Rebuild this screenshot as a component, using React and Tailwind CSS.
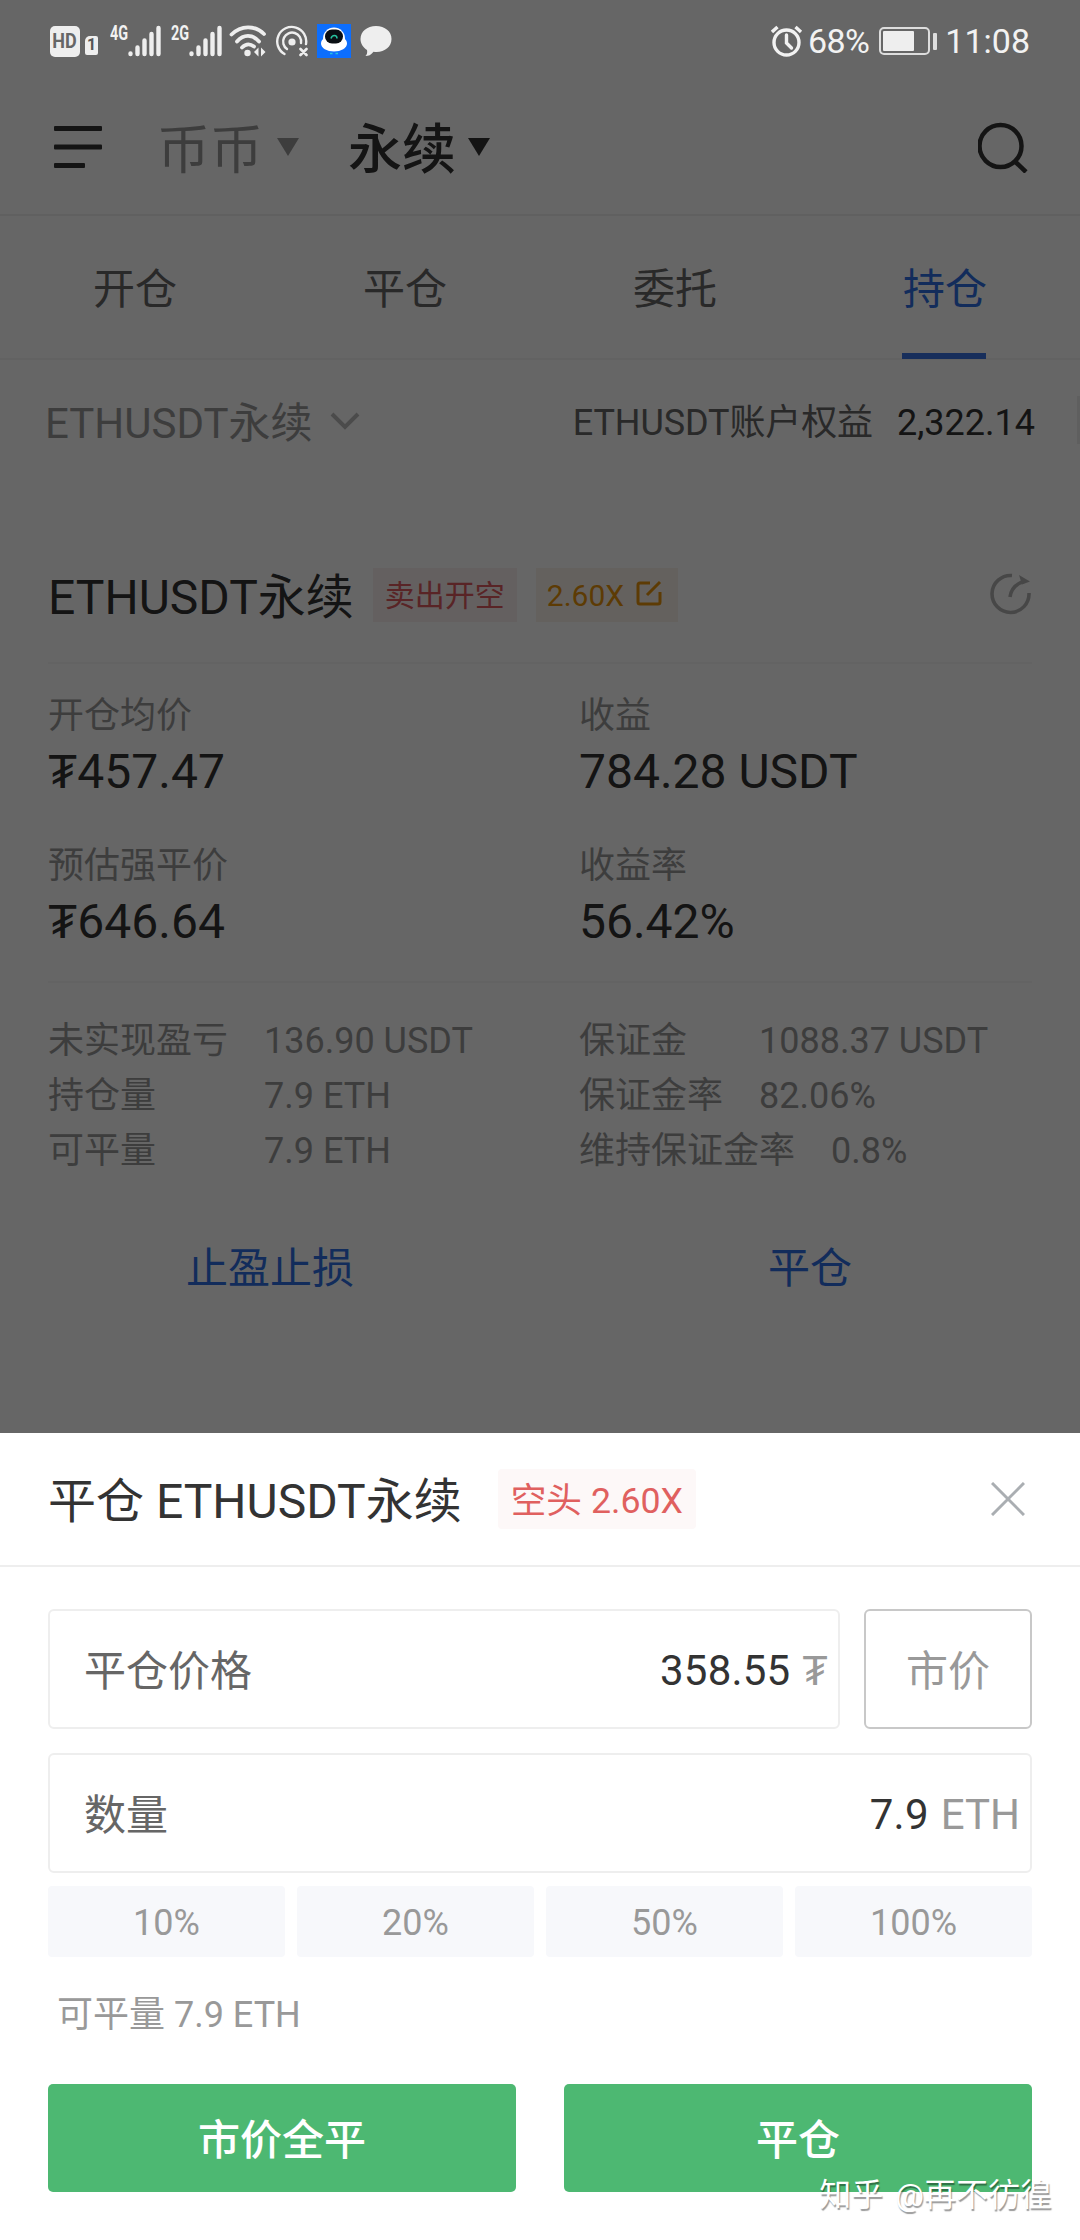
import { useState } from "react";

const tabs = ["开仓", "平仓", "委托", "持仓"];

const summary = [
    { label: "开仓均价", value: "₮457.47" },
    { label: "收益", value: "784.28 USDT" },
    { label: "预估强平价", value: "₮646.64" },
    { label: "收益率", value: "56.42%" },
];

const leftDetails = [
    { label: "未实现盈亏", value: "136.90 USDT" },
    { label: "持仓量", value: "7.9 ETH" },
    { label: "可平量", value: "7.9 ETH" },
];

const rightDetails = [
    { label: "保证金", value: "1088.37 USDT" },
    { label: "保证金率", value: "82.06%" },
    { label: "维持保证金率", value: "0.8%" },
];

const percents = ["10%", "20%", "50%", "100%"];

export default function App() {
    const [activeTab, setActiveTab] = useState("持仓");

    return (
        <div className="relative h-[2240px] w-[1080px] overflow-hidden bg-white font-[Roboto,'Noto_Sans_CJK_SC',sans-serif] text-[#333]">
            {/* Page below the overlay */}
            <div className="flex flex-col pt-[80px]">
                <TopBar />

                <nav className="grid h-[144px] grid-cols-4 border-b-2 border-[#f5f5f5]">
                    {tabs.map((tab) => (
                        <button
                            key={tab}
                            onClick={() => setActiveTab(tab)}
                            className={`flex flex-col items-center justify-between pt-[43px] text-[42px] leading-[62px] ${
                                tab === activeTab ? "text-[#2f6fe4]" : "text-[#666]"
                            }`}
                        >
                            {tab}
                            <span className={`mr-[2px] -mb-px h-[6px] w-[84px] ${tab === activeTab ? "bg-[#3a73e4]" : ""}`} />
                        </button>
                    ))}
                </nav>

                <div className="flex h-[126px] items-center justify-between pl-[45px]">
                    <div className="flex items-center text-[42px] text-[#999]">
                        ETHUSDT永续
                        <svg className="mb-[3px] ml-[16px] h-[20px] w-[32px]" viewBox="0 0 32 20" fill="none" stroke="#bbb" strokeWidth="4">
                            <path d="M3 2l13 13L29 2" />
                        </svg>
                    </div>
                    <div className="flex items-center text-[36px] text-[#666]">
                        <span className="tracking-[-0.1px]">ETHUSDT账户权益</span>
                        <span className="ml-[24px] text-[#333]">2,322.14</span>
                        <span className="mb-[6px] ml-[42px] h-[48px] w-[3px] bg-[#eee]" />
                    </div>
                </div>

                <PositionCard />
            </div>

            <div className="absolute inset-0 bg-black/60" />

            <StatusBar />
            <CloseSheet />

            <div className="absolute right-[28px] bottom-[22px] text-[32px] leading-[46px] [word-spacing:4px] text-white [text-shadow:1px_2px_1px_rgba(0,0,0,0.4)]">
                知乎 @再不彷徨
            </div>
        </div>
    );
}

function StatusBar() {
    return (
        <div className="absolute inset-x-0 top-0 flex h-[82px] items-center justify-between pr-[50px] pl-[50px] text-[#f2f2f2]">
            <div className="flex items-center">
                <div className="flex h-[31px] w-[30px] items-center justify-center rounded-[5px] bg-[#eee] text-[20px] font-bold text-[#666]">
                    <span className="scale-x-[0.9]">HD</span>
                </div>
                <div className="mt-[8px] ml-[5px] flex h-[19px] w-[13px] items-center justify-center rounded-[2px] rounded-tl-[5px] bg-[#eee] text-[16px] font-bold text-[#555]">
                    1
                </div>
                <Signal label="4G" className="ml-[12px]" />
                <Signal label="2G" className="ml-[10px]" />

                {/* wifi */}
                <svg className="ml-[7px] h-[32px] w-[38px]" viewBox="0 0 38 32" fill="none" stroke="#eee" strokeWidth="3.8" strokeLinecap="round">
                    <path d="M2.500 9.500C12 0 26 0 35 9" />
                    <path d="M8 16.500C14.500 9 23.500 9 30 16.500" />
                    <path d="M13 22.500C17 18.500 21 18.500 25 21.500" />
                    <circle cx="18.500" cy="28" r="3.200" fill="#eee" stroke="none" />
                    <path d="M29.500 22.500v9l-4.500-4.500zM32 31.500v-9l4.500 4.500z" fill="#eee" stroke="none" />
                </svg>

                {/* hotspot */}
                <svg className="ml-[9px] h-[32px] w-[32px]" viewBox="0 0 32 32" fill="none" stroke="#eee" strokeWidth="2.400" strokeLinecap="round">
                    <path d="M8.500 29A14.500 14.500 0 1 1 30 19" />
                    <path d="M11 24A9 9 0 1 1 25 18" />
                    <circle cx="16" cy="17" r="3.600" fill="#eee" stroke="none" />
                    <path d="M24.500 24l6 6M30.500 24l-6 6" strokeWidth="2.600" />
                </svg>

                {/* assistant app */}
                <svg className="ml-[9px] h-[34px] w-[34px]" viewBox="0 0 34 34">
                    <rect width="34" height="34" fill="#0d6efd" />
                    <ellipse cx="17" cy="19.500" rx="13" ry="8" fill="#fff" />
                    <circle cx="17" cy="14.500" r="11" fill="#fff" />
                    <rect x="8" y="5.500" width="18" height="14" rx="7" fill="#0a0f14" />
                    <path d="M14 14.500c1-4 6-4 6 0" fill="none" stroke="#27c4a0" strokeWidth="1.500" />
                    <path d="M13 29.500h2.500M18.500 29.500h2.500" stroke="#27c4e0" strokeWidth="1.500" />
                </svg>

                {/* message */}
                <svg className="ml-[8px] h-[32px] w-[33px]" viewBox="0 0 33 32" fill="#eee">
                    <path d="M17 1C26 1 32.500 6.500 32.500 14S26 27 17.500 27c-1 0-2 0-3-.300C12 30 9.500 31 6.500 31c1.500-1.500 2-3.500 1.500-6C4 22.500 1.500 18.500 1.500 14 1.500 6.500 8 1 17 1z" />
                </svg>
            </div>

            <div className="flex items-center text-[34px]">
                <svg className="mr-[5px] h-[32px] w-[32px]" viewBox="0 0 32 32" fill="none" stroke="#f2f2f2" strokeWidth="3.400">
                    <circle cx="15.500" cy="17.500" r="12.500" />
                    <path d="M15.500 10v8l5 5" strokeLinecap="round" />
                    <path d="M1 7l5.500-5M30 7l-5.500-5" />
                </svg>
                <span className="tracking-[-0.6px]">68%</span>
                <div className="ml-[10px] flex h-[28px] w-[51px] rounded-[5px] border-2 border-[#ddd] p-[2px]">
                    <div className="w-[31px] rounded-[1px] bg-[#eee]" />
                </div>
                <div className="mr-[8px] ml-[3px] h-[17px] w-[4px] rounded-[1px] bg-[#ddd]" />
                11:08
            </div>
        </div>
    );
}

function Signal({ label, className }) {
    return (
        <div className={`flex h-[32px] items-start ${className}`}>
            <span className="w-[18px] origin-left scale-x-[0.72] text-[20px] leading-[16px] font-bold">{label}</span>
            <svg className="h-[32px] w-[33px]" viewBox="0 0 33 32" stroke="#eee" strokeWidth="4.400" strokeLinecap="round">
                <path d="M2.500 28.500v.5M9.500 22.500v6.500M16.500 15.500v13.500M23.500 9v20M30.500 3v26" />
            </svg>
        </div>
    );
}

function TopBar() {
    return (
        <header className="flex h-[136px] items-center justify-between border-b-2 border-[#f0f0f0] pr-[50px] pl-[54px]">
            <div className="flex items-center">
                <svg className="h-[42px] w-[48px]" viewBox="0 0 48 42" fill="#333">
                    <rect width="48" height="5" rx="1" />
                    <rect y="18.500" width="48" height="5" rx="1" />
                    <rect y="37" width="31" height="5" rx="1" />
                </svg>
                <span className="ml-[55px] pt-[8px] text-[53px] leading-[80px] text-[#999]">币币</span>
                <Triangle color="#999" className="ml-[14px]" />
                <span className="ml-[49px] pt-[8px] text-[54px] leading-[80px] font-medium">永续</span>
                <Triangle color="#333" className="ml-[12px]" />
            </div>
            <svg className="h-[52px] w-[52px]" viewBox="0 0 52 52" fill="none" stroke="#333" strokeWidth="4.500">
                <circle cx="22.500" cy="25" r="21" />
                <path d="M36.500 40l11.500 11" />
            </svg>
        </header>
    );
}

function Triangle({ color, className }) {
    return (
        <svg className={`h-[18px] w-[22px] ${className}`} viewBox="0 0 22 18" fill={color}>
            <path d="M0 0h22L11 18z" />
        </svg>
    );
}

function PositionCard() {
    return (
        <section className="px-[48px] pt-[66px]">
            <div className="flex h-[112px] items-start border-b-2 border-[#f7f7f7]">
                <h2 className="pt-[11px] text-[48px] leading-[70px]">ETHUSDT永续</h2>
                <span className="mt-[16px] ml-[19px] flex h-[54px] w-[144px] items-center justify-center bg-[#f9efef] text-[30px] text-[#de5b5f]">
                    卖出开空
                </span>
                <span className="mt-[16px] ml-[19px] flex h-[54px] w-[142px] items-center bg-[#faf3eb] pl-[11px] text-[30px] text-[#e8930c]">
                    2.60X
                    <svg className="mb-[4px] ml-[11px] h-[28px] w-[28px]" viewBox="0 0 28 28" fill="none" stroke="#e8930c" strokeWidth="3">
                        <path d="M15 4H5a2 2 0 0 0-2 2v17a2 2 0 0 0 2 2h18a2 2 0 0 0 2-2V13M12 16L25 3" />
                    </svg>
                </span>
                <svg className="mt-[19px] ml-auto h-[44px] w-[44px]" viewBox="0 0 44 44" fill="none" stroke="#b2b2b2" strokeWidth="3.600">
                    <path d="M24 4.500A18.500 18.500 0 1 0 41 22" />
                    <path d="M22 26c1-8 6-13.500 15-16" />
                    <path d="M31 4l11 6.500-8 3z" fill="#b2b2b2" stroke="none" />
                </svg>
            </div>

            <div className="grid grid-cols-[531px_1fr] gap-y-[39px] border-b-2 border-[#f7f7f7] pt-[24px] pb-[32px]">
                {summary.map((item) => (
                    <div key={item.label}>
                        <p className="text-[36px] leading-[56px] text-[#999]">{item.label}</p>
                        <p className="text-[48px] leading-[55px]">{item.value}</p>
                    </div>
                ))}
            </div>

            <div className="grid grid-cols-[531px_1fr] pt-[31px] text-[36px] leading-[55px] text-[#999]">
                <div>
                    {leftDetails.map((row) => (
                        <p key={row.label} className="flex">
                            <span className="w-[216px]">{row.label}</span>
                            {row.value}
                        </p>
                    ))}
                </div>
                <div>
                    {rightDetails.map((row) => (
                        <p key={row.label} className="flex">
                            <span className="min-w-[180px] pr-[36px]">{row.label}</span>
                            {row.value}
                        </p>
                    ))}
                </div>
            </div>

            <div className="-mx-[48px] grid grid-cols-2 pt-[59px] text-[42px] leading-[62px] text-[#2f6fe4]">
                <button>止盈止损</button>
                <button>平仓</button>
            </div>
        </section>
    );
}

function CloseSheet() {
    return (
        <div className="absolute inset-x-0 top-[1433px] bottom-0 bg-white">
            <div className="flex h-[134px] items-center border-b-2 border-[#eee] px-[48px]">
                <h3 className="pt-[5px] text-[48px] leading-[70px]">平仓 ETHUSDT永续</h3>
                <span className="ml-[36px] flex h-[60px] items-center rounded-[4px] bg-[#fdf8f8] px-[13px] pt-[5px] text-[35.7px] text-[#e0605f]">
                    空头 2.60X
                </span>
                <svg className="mr-[7px] ml-auto h-[34px] w-[34px]" viewBox="0 0 34 34" fill="none" stroke="#aaaeb2" strokeWidth="3">
                    <path d="M1 1l32 32M33 1L1 33" />
                </svg>
            </div>

            <div className="px-[48px] pt-[42px]">
                <div className="flex gap-[24px]">
                    <Field label="平仓价格" value="358.55" unit="₮" />
                    <button className="h-[120px] w-[168px] rounded-[6px] border-2 border-[#c8c8c8] pt-[5px] text-[42px] text-[#999]">
                        市价
                    </button>
                </div>
                <div className="mt-[24px] flex">
                    <Field label="数量" value="7.9" unit="ETH" />
                </div>

                <div className="mt-[13px] grid grid-cols-4 gap-[12px]">
                    {percents.map((p) => (
                        <button key={p} className="h-[71px] rounded-[4px] bg-[#f7f8fb] pt-[2px] text-[36px] text-[#999]">
                            {p}
                        </button>
                    ))}
                </div>

                <p className="mt-[31px] pl-[9px] text-[36px] leading-[54px] text-[#999]">可平量 7.9 ETH</p>

                <div className="mt-[42px] grid grid-cols-2 gap-[48px] text-[42px] font-medium text-white">
                    <button className="h-[108px] rounded-[5px] bg-[#4db872] pt-[4px]">市价全平</button>
                    <button className="h-[108px] rounded-[5px] bg-[#4db872] pt-[4px]">平仓</button>
                </div>
            </div>
        </div>
    );
}

function Field({ label, value, unit }) {
    return (
        <div className="flex h-[120px] flex-1 items-center rounded-[6px] border-2 border-[#eee] pt-[3px] pr-[10px] pl-[34px] text-[42px]">
            <span className="pt-[2px] text-[#666]">{label}</span>
            <span className="ml-auto tracking-[0.2px]">{value}</span>
            <span className="ml-[12px] text-[#999]">{unit}</span>
        </div>
    );
}
